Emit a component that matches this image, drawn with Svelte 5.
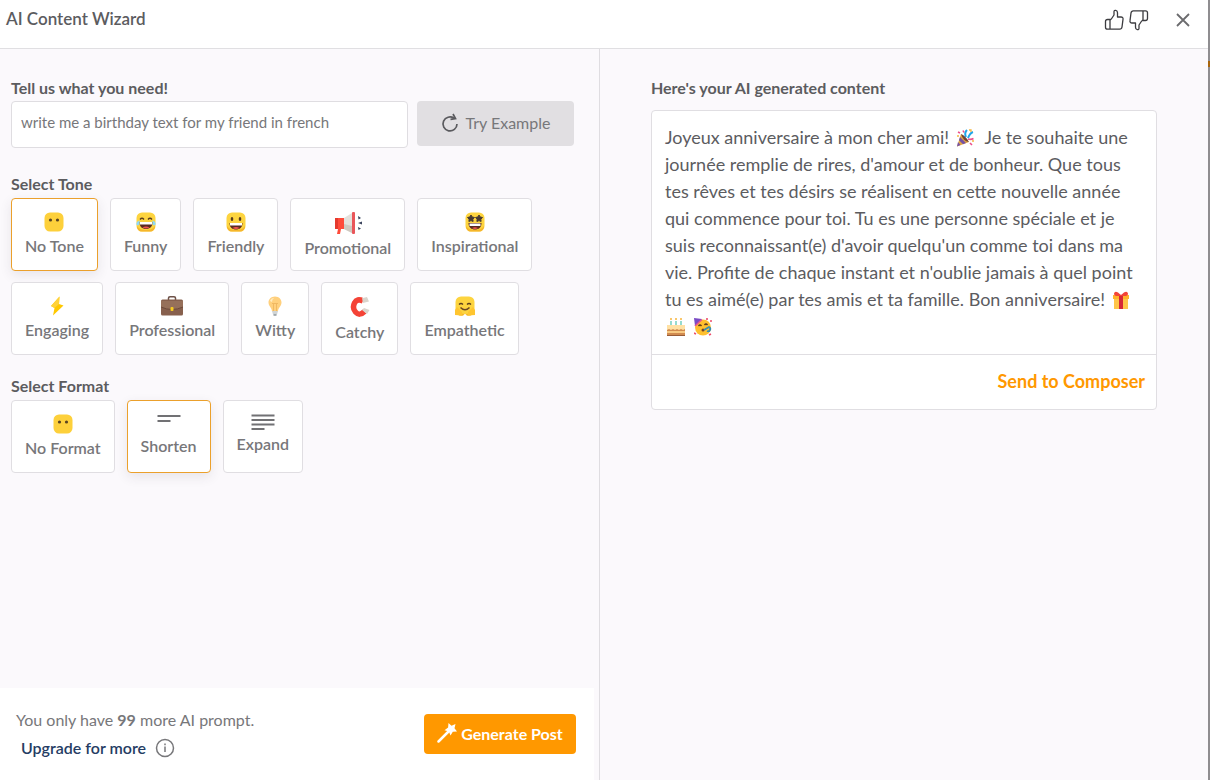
<script lang="ts">
type Option = { label: string; icon: string; width: number; height: number };

const tones: Option[] = [
	{ label: "No Tone", icon: "blank", width: 20, height: 20 },
	{ label: "Funny", icon: "funny", width: 20, height: 20 },
	{ label: "Friendly", icon: "friendly", width: 20, height: 20 },
	{ label: "Promotional", icon: "megaphone", width: 28, height: 22 },
	{ label: "Inspirational", icon: "starry", width: 20, height: 20 },
	{ label: "Engaging", icon: "bolt", width: 20, height: 20 },
	{ label: "Professional", icon: "briefcase", width: 22, height: 20 },
	{ label: "Witty", icon: "bulb", width: 20, height: 20 },
	{ label: "Catchy", icon: "magnet", width: 20, height: 22 },
	{ label: "Empathetic", icon: "hug", width: 20, height: 20 },
];

const formats: Option[] = [
	{ label: "No Format", icon: "blank", width: 20, height: 20 },
	{ label: "Shorten", icon: "short", width: 24, height: 18 },
	{ label: "Expand", icon: "long", width: 24, height: 16 },
];

let prompt = $state("write me a birthday text for my friend in french");
let tone = $state("No Tone");
let format = $state("Shorten");
let remaining = 99;
</script>

{#snippet face()}
	<rect x="0.5" y="0.5" width="19" height="19" rx="5.5" fill="#fdd43f" />
	<path d="M1 14c0 3.500 2 5.500 5 5.500h8c3 0 5-2 5-5.500-2 3-5 4-9 4s-7-1-9-4z" fill="#f5b62c" />
{/snippet}

{#snippet optionIcon(o: Option)}
	<svg class="icon" width={o.width} height={o.height} viewBox="0 0 {o.width} {o.height}" aria-hidden="true">
		{#if o.icon === "blank"}
			<rect x="0.5" y="0.5" width="19" height="19" rx="5.5" fill="#fdd03b" />
			<circle cx="6.500" cy="8" r="1.600" fill="#5a4320" />
			<circle cx="13.500" cy="8" r="1.600" fill="#5a4320" />
		{:else if o.icon === "funny"}
			{@render face()}
			<path d="M4 7.500q2-2.500 4 0M12 7.500q2-2.500 4 0" fill="none" stroke="#5a3d1c" stroke-width="1.300" />
			<path d="M3.500 10h13c0 5-3 7-6.500 7s-6.500-2-6.500-7z" fill="#5b2b20" />
			<path d="M4 10h12v2.500H4z" fill="#fff" />
			<path d="M6.500 15.500q3.500-2 7 0-3.500 2-7 0z" fill="#ef5350" />
			<path d="M3.500 8.500C1 9.500 0 11 .5 12.500s3 1 3-1zM16.500 8.500c2.500 1 3.500 2.500 3 4s-3 1-3-1z" fill="#8fd8f5" />
		{:else if o.icon === "friendly"}
			{@render face()}
			<ellipse cx="6" cy="7" rx="1.300" ry="2" fill="#5a3d1c" />
			<ellipse cx="14" cy="7" rx="1.300" ry="2" fill="#5a3d1c" />
			<path d="M3.500 11h13c0 4.500-3 6.500-6.500 6.500S3.500 15.500 3.500 11z" fill="#5b2b20" />
			<path d="M4 11h12v2.500H4z" fill="#fff" />
			<path d="M6.500 16q3.500-2 7 0-3.500 2-7 0z" fill="#ef5350" />
		{:else if o.icon === "megaphone"}
			<path d="M1 6h9v11H7l-1 5H3l1-5H1z" fill="#ff4b3a" />
			<path d="M1 6h3v11H1z" fill="#e53a2e" />
			<path d="M10 6l8-5v20l-8-4z" fill="#e4e1dc" />
			<path d="M10 12l8 2v7l-8-4z" fill="#cfc9c0" />
			<rect x="18" width="3" height="22" rx="1" fill="#e9565a" />
			<path d="M24 4l3 2-2.500 1.500zM24 11l4-1.500v3zM24 15l3 1.500-2.500 1.500z" fill="#39435c" />
		{:else if o.icon === "starry"}
			{@render face()}
			<path d="M6 3l1.200 2 2.300.5-1.600 1.700.2 2.300L6 8.600 3.900 9.500l.2-2.300L2.500 5.500 4.800 5zM14 3l1.200 2 2.300.5-1.600 1.700.2 2.300-2.100-.9-2.100.9.2-2.300-1.600-1.700 2.300-.5z" fill="#473a32" stroke="#473a32" />
			<path d="M3.500 11h13c0 4.500-3 6.500-6.500 6.500S3.500 15.500 3.500 11z" fill="#5b2b20" />
			<path d="M4.500 11.500h11V14h-11z" fill="#fff" />
			<path d="M7 16q3-1.500 6 0-3 2-6 0z" fill="#ef5350" />
		{:else if o.icon === "bolt"}
			<path d="M12.500.5L4 10l3.500 2L6 19.500 16.500 9.500 12 8z" fill="#ffc800" />
			<path d="M12.500.5L4 10l3.500 2L12 8z" fill="#ffd23a" />
		{:else if o.icon === "briefcase"}
			<path d="M7.500 4V2q0-1.200 1.500-1.200h4q1.500 0 1.500 1.200v2" fill="none" stroke="#6d5148" stroke-width="1.500" />
			<rect y="3.500" width="22" height="16" rx="1.500" fill="#87604d" />
			<path d="M0 5h22v6q-11 5-22 0z" fill="#96705a" />
			<path d="M0 11q11 5 22 0" fill="none" stroke="#6d4a3b" />
			<rect x="9.500" y="11" width="3" height="4" rx="1" fill="#f5ca22" />
		{:else if o.icon === "bulb"}
			<path d="M10 .5c4 0 6.500 2.800 6.500 6 0 4-3.500 5-3.500 9H7c0-4-3.500-5-3.500-9 0-3.200 2.500-6 6.500-6z" fill="#ffd07d" />
			<path d="M5 5q1-3 4-3-2 1.500-2 4z" fill="#ffebc0" />
			<path d="M7 7.500h6M8.500 8v7M11.500 8v7" stroke="#f0b862" fill="none" />
			<path d="M7 15h6l-1 3.500H8z" fill="#cfd4d6" />
			<path d="M8.500 18.500h3v1h-3z" fill="#59666e" />
		{:else if o.icon === "magnet"}
			<path d="M13 5Q7 2 4.500 7t1 9q4 4.500 9-.5" fill="none" stroke="#f44336" stroke-width="5.500" />
			<path d="M12 2.200l5-1.200 2 4.500-6 1.500z" fill="#dad4cc" />
			<path d="M14 12l5.500 2-2.500 4-5-4z" fill="#dad4cc" />
		{:else if o.icon === "hug"}
			{@render face()}
			<path d="M4 8.500q2-2 4 0M12 8.500q2-2 4 0" fill="none" stroke="#5a3d1c" stroke-width="1.300" />
			<path d="M5.500 11.500q4.500 4.500 9 0" fill="none" stroke="#6b4724" stroke-width="1.500" />
			<path d="M0 19v-5l2-3 5 5v3.500zM20 19v-5l-2-3-5 5v3.500z" fill="#ffc52f" />
			<path d="M8 20q2-4 4 0z" fill="#fff" />
		{:else if o.icon === "short"}
			<path d="M.5 2h23M.5 7h13" stroke="#717174" stroke-width="2" />
		{:else if o.icon === "long"}
			<path d="M.5 1.500h23M.5 6h23M.5 10.500h23M.5 15h13" stroke="#717174" stroke-width="2" />
		{/if}
	</svg>
{/snippet}

{#snippet thumb()}
	<path d="M7 10.500l3-4.500V2.800c0-2.300 3.500-2 3.500 1V8h3.500c1.500 0 2.300 1 2 2.300l-1 7.700c-.2 1.400-1 2.200-2.300 2.200H6M6 10.500H3.500c-1.300 0-2 .7-2 2v5.700c0 1.300.7 2 2 2H6M6 10.500v9.700M6 10.500h1" fill="none" stroke="currentColor" stroke-width="1.300" stroke-linejoin="round" />
{/snippet}

<div class="wizard">
	<header>
		<h1>AI Content Wizard</h1>
		<div class="actions">
			<button class="plain" aria-label="Good result">
				<svg width="21" height="22" viewBox="0 0 21 22">{@render thumb()}</svg>
			</button>
			<button class="plain" aria-label="Bad result">
				<svg width="21" height="22" viewBox="0 0 21 22"><g transform="rotate(180 10.5 11)">{@render thumb()}</g></svg>
			</button>
			<button class="plain close" aria-label="Close">
				<svg width="14" height="14" viewBox="0 0 14 14">
					<path d="M1 1l12 12M13 1L1 13" stroke="#6b6b6e" stroke-width="1.800" />
				</svg>
			</button>
		</div>
	</header>

	<div class="panes">
		<section class="editor">
			<div class="form">
				<label class="heading" for="prompt">Tell us what you need!</label>
				<div class="prompt-row">
					<input id="prompt" type="text" bind:value={prompt} />
					<button class="example">
						<svg width="18" height="20" viewBox="0 0 18 20" aria-hidden="true">
							<path d="M13 5.200A7 7 0 1 0 16 11" fill="none" stroke="#5a5a5e" stroke-width="1.700" />
							<path d="M12 1l2.500 4.500-5 .8" fill="none" stroke="#5a5a5e" stroke-width="1.700" />
						</svg>
						Try Example
					</button>
				</div>

				<h2 class="heading">Select Tone</h2>
				<div class="options">
					{#each tones as o}
						<button class="option" class:selected={tone === o.label} aria-pressed={tone === o.label} onclick={() => (tone = o.label)}>
							{@render optionIcon(o)}
							{o.label}
						</button>
					{/each}
				</div>

				<h2 class="heading format">Select Format</h2>
				<div class="options">
					{#each formats as o}
						<button class="option" class:selected={format === o.label} aria-pressed={format === o.label} onclick={() => (format = o.label)}>
							{@render optionIcon(o)}
							{o.label}
						</button>
					{/each}
				</div>
			</div>

			<footer>
				<div class="quota">
					<p>You only have <b>{remaining}</b> more AI prompt.</p>
					<div class="upgrade">
						<a href="#upgrade">Upgrade for more</a>
						<svg width="20" height="20" viewBox="0 0 20 20" aria-hidden="true">
							<circle cx="10" cy="10" r="8.500" fill="none" stroke="#77777a" stroke-width="1.500" />
							<path d="M10 8.500V14M10 5.500v1.800" stroke="#77777a" stroke-width="1.500" />
						</svg>
					</div>
				</div>
				<button class="generate">
					<svg width="20" height="20" viewBox="0 0 20 20" aria-hidden="true">
						<path d="M1.500 18.500L12 8" stroke="#fff" stroke-width="2.500" stroke-linecap="round" />
						<path d="M11.500 0l3 2.700L18.500 1l-1 4.300L20 8.500l-4.200.3-2.300 3.700-1.600-4L7.500 7.300l3.600-2.800z" fill="#fff" />
					</svg>
					Generate Post
				</button>
			</footer>
		</section>

		<section class="result">
			<h2 class="heading">Here's your AI generated content</h2>
			<article>
				<p>
					Joyeux anniversaire à mon cher ami!
					<svg class="emoji" viewBox="0 0 18 18" role="img" aria-label="party popper">
						<path d="M5 5l8 8-12 4.500z" fill="#e3a640" />
						<path d="M4 8l6 6-3 1.200-4-4zM2 13l2.500 3L1 17.500z" fill="#7552a5" />
						<path d="M5 5q4 1 8 8Q7 12 5 5z" fill="#754336" />
						<path d="M10 8q-2-4 1-7M12 9q2-5 5-6" fill="none" stroke="#21a5e8" stroke-width="2" />
						<path d="M12 10q3 1 5.500-.5M2 3l2 1M7 1.500l1 2M14 14l2 2" fill="none" stroke="#ed4e8b" stroke-width="1.600" />
						<path d="M13 1h2v2M16 12h2M1 7h2" fill="none" stroke="#f5b642" stroke-width="1.300" />
					</svg>&nbsp;
					Je te souhaite une journée remplie de rires, d'amour et de bonheur. Que tous tes rêves et tes désirs se réalisent en cette nouvelle année qui commence pour toi. Tu es une personne spéciale et je suis reconnaissant(e) d'avoir quelqu'un comme toi dans ma vie. Profite de chaque instant et n'oublie jamais à quel point tu es aimé(e) par tes amis et ta famille. Bon anniversaire!
					<svg class="emoji" viewBox="0 0 18 18" role="img" aria-label="gift">
						<path d="M2 7h14v11H2z" fill="#ffc548" />
						<path d="M1 4h16v4H1z" fill="#ffb22b" />
						<path d="M7 4h4v14H7z" fill="#d62836" />
						<path d="M9 4Q4-1 2.500 1.500T4 5h5zM9 4q5-5 6.500-2.500T14 5H9z" fill="#f34437" />
					</svg>
					<svg class="emoji" viewBox="0 0 18 18" role="img" aria-label="birthday cake">
						<path d="M4 3v6M9 3v6M14 3v6" stroke="#5fc8b4" stroke-width="1.300" />
						<path d="M4 0v2M9 0v2M14 0v2" stroke="#f8b53d" stroke-width="1.500" />
						<path d="M0 8h18v9H0z" fill="#d18b50" />
						<path d="M0 7h18v4l-2 1-2-1-2 1-2-1-2 1-2-1-2 1-2-1-2 1z" fill="#ffe1a4" />
						<path d="M0 13h18v2H0z" fill="#f8ca82" />
						<path d="M0 17h18v1H0z" fill="#995c37" />
					</svg>
					<svg class="emoji" viewBox="0 0 18 18" role="img" aria-label="partying face">
						<circle cx="9" cy="9.500" r="8" fill="#ffc02e" />
						<path d="M0 0l8 1-7 7z" fill="#7a4bc4" />
						<path d="M1 8L8 1.500" stroke="#e65391" stroke-width="1.500" />
						<path d="M4.500 8q1.500-2 3 0M10.500 7q1.500-2 3 0" fill="none" stroke="#59361c" stroke-width="1.300" />
						<circle cx="9" cy="12" r="1.500" fill="#774322" />
						<path d="M10 12l5-3q2 1 1 3t-3 1" fill="none" stroke="#388eaf" stroke-width="1.800" />
						<path d="M13 0v2M16 3h2M0 15l2 1M15 17l2-1" stroke="#ed4e6c" stroke-width="1.600" />
					</svg>
				</p>
				<div class="send">
					<button class="plain">Send to Composer</button>
				</div>
			</article>
		</section>
	</div>
</div>

<style>
	:global(body) {
		margin: 0;
		background: linear-gradient(#8f8d90 61px, #a8650c 61px, #a8650c 67px, #8f8d90 67px);
		font-family: Lato, "Liberation Sans", sans-serif;
	}

	* {
		box-sizing: border-box;
	}

	h1,
	h2,
	p {
		margin: 0;
	}

	button,
	input {
		font: inherit;
		margin: 0;
	}

	button {
		cursor: pointer;
	}

	.plain {
		display: flex;
		padding: 0;
		border: 0;
		background: none;
		color: #3c3c40;
	}

	.wizard {
		display: flex;
		flex-direction: column;
		min-height: 100vh;
		margin-right: 2px;
		background: #fbf9fc;
		color: #5c5c5f;
	}

	header {
		display: flex;
		align-items: center;
		justify-content: space-between;
		height: 49px;
		padding: 0 18px 8px 6px;
		border-bottom: 1px solid #e0dfe2;
		background: #fff;
	}

	h1 {
		padding-bottom: 2px;
		font-size: 17px;
		font-weight: 600;
		line-height: 24px;
	}

	.actions {
		display: flex;
		align-items: center;
		gap: 3px;
	}

	.close {
		margin-left: 24px;
	}

	.panes {
		display: grid;
		flex: 1;
		grid-template-columns: 600fr 608fr;
	}

	.editor {
		display: flex;
		flex-direction: column;
		justify-content: space-between;
		border-right: 1px solid #dfdde1;
	}

	.form {
		padding: 28px 25px 24px 11px;
	}

	.heading {
		display: block;
		padding-bottom: 2px;
		font-size: 16px;
		font-weight: 700;
		line-height: 22px;
	}

	.prompt-row {
		display: flex;
		align-items: flex-start;
		gap: 9px;
		margin-bottom: 25px;
	}

	input {
		flex: 1;
		min-width: 0;
		height: 47px;
		padding: 0 9px 6px;
		border: 1px solid #dfdde1;
		border-radius: 4px;
		background: #fff;
		color: #77777a;
		font-size: 15px;
	}

	.example {
		display: flex;
		align-items: center;
		justify-content: center;
		gap: 7px;
		width: 157px;
		height: 45px;
		padding: 0 0 2px;
		border: 0;
		border-radius: 4px;
		background: #e1dfe2;
		color: #77777a;
		font-size: 16px;
	}

	.options {
		display: flex;
		flex-wrap: wrap;
		gap: 11px 12px;
		padding-top: 1px;
	}

	.format {
		margin-top: 20px;
	}

	.option {
		display: flex;
		flex-direction: column;
		align-items: center;
		gap: 2px;
		height: 73px;
		padding: 13px 13px 0;
		border: 1px solid #e0dee2;
		border-radius: 4px;
		background: #fff;
		color: #77777a;
		font-size: 16px;
		font-weight: 600;
		line-height: 24px;
	}

	.selected {
		border-color: #eba02c;
		box-shadow: 0 4px 12px rgba(60, 50, 70, 0.1);
	}

	.icon {
		flex: none;
	}

	footer {
		display: flex;
		align-items: center;
		justify-content: space-between;
		height: 92px;
		margin-right: 5px;
		padding: 0 18px 0 16px;
		background: #fff;
	}

	.quota {
		color: #77777a;
		font-size: 16px;
		line-height: 28px;
	}

	.upgrade {
		display: flex;
		align-items: center;
		gap: 9px;
		padding-left: 5px;
	}

	a {
		color: #253c63;
		font-weight: 600;
		text-decoration: none;
	}

	.generate {
		display: flex;
		align-items: center;
		justify-content: center;
		gap: 4px;
		width: 152px;
		height: 40px;
		padding: 0 0 2px;
		border: 0;
		border-radius: 4px;
		background: #ff9800;
		color: #fff;
		font-size: 16px;
		font-weight: 700;
	}

	.result {
		padding: 28px 51px 24px;
	}

	article {
		margin-top: 9px;
		border: 1px solid #e0dee2;
		border-radius: 4px;
		background: #fff;
	}

	article p {
		padding: 13px 13px 14px;
		font-size: 18px;
		line-height: 27px;
	}

	.emoji {
		width: 18px;
		height: 18px;
		margin: 0 2px;
		vertical-align: -3px;
	}

	.send {
		display: flex;
		align-items: center;
		justify-content: flex-end;
		height: 55px;
		padding: 0 11px 2px;
		border-top: 1px solid #e0dee2;
	}

	.send button {
		color: #ff9800;
		font-size: 18px;
		font-weight: 700;
	}
</style>
